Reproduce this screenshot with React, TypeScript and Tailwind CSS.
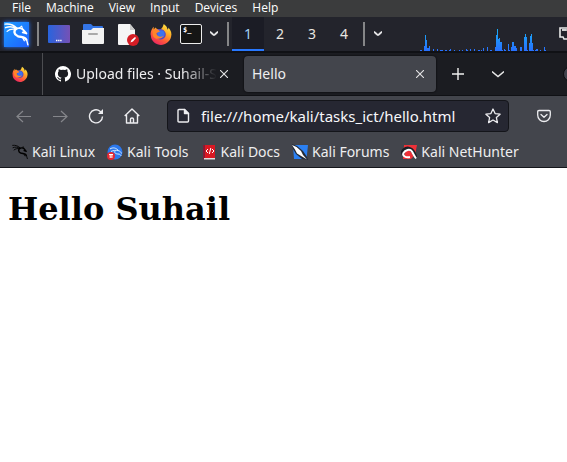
import React from "react";

const MENUS = ["File", "Machine", "View", "Input", "Devices", "Help"];

// CPU load samples: [column, height]
const LOAD: [number, number][] = [
  [0, 1], [1, 1], [4, 5], [5, 16], [6, 11], [7, 3], [8, 3], [9, 5], [13, 2], [17, 2], [20, 1], [21, 1], [22, 1],
  [25, 1], [26, 1], [29, 1], [30, 2], [34, 1], [39, 1], [42, 1], [46, 2], [47, 1], [50, 2], [54, 2], [58, 1],
  [59, 1], [61, 1], [63, 3], [67, 4], [70, 1], [71, 1], [75, 4], [76, 16], [77, 22], [78, 12], [79, 13], [80, 9],
  [81, 9], [82, 1], [84, 2], [85, 1], [88, 7], [89, 1], [91, 4], [92, 9], [93, 9], [94, 5], [95, 5], [96, 3],
  [100, 4], [101, 4], [104, 14], [105, 17], [106, 14], [107, 1], [109, 8], [110, 15], [111, 17], [112, 8],
  [113, 1], [115, 1], [116, 2], [117, 2], [120, 1], [124, 4], [125, 1],
];

function Dragon({ className }: { className?: string }) {
  return (
    <svg viewBox="0 0 24 24" className={className} fill="none" stroke="currentColor" strokeLinecap="round" strokeLinejoin="round" aria-hidden="true">
      <path d="M1 2c4-.5 8 .5 11.500 4M1.500 5.500C5 4 9 4.500 12 6.500M3 9c2-2 5-2.500 8-2" strokeWidth="1.300" />
      <path d="M12 6.300c-3 2-2.500 5.700 1 7.200 3.500 1.300 7 .5 8.500 3.500" strokeWidth="2.200" />
      <path d="M21.500 17c.8 1.500.8 3 1.500 5M18 15l1.500 3" strokeWidth="1.300" />
      <path d="M12 6.300c2.500-.8 4.500-.5 6.500 1.200l3 3.500-3.500-1" strokeWidth="1.800" />
      <path d="M15 5.500l2-1.500 1 3" strokeWidth="1" />
    </svg>
  );
}

function Firefox({ className, id }: { className?: string; id: string }) {
  return (
    <svg viewBox="0 0 24 24" className={className} aria-hidden="true">
      <defs>
        <linearGradient id={id} x1=".85" y1="0" x2=".25" y2="1">
          <stop offset="0" stopColor="#fff04d" />
          <stop offset=".35" stopColor="#ffae26" />
          <stop offset=".7" stopColor="#ff563b" />
          <stop offset="1" stopColor="#e92266" />
        </linearGradient>
      </defs>
      <path fill={`url(#${id})`} d="M15 1c3 2 4 4 4 6 1 0 1-1 1-2 3 3 4 7 3 10-1 5-6 9-11 9S1 20 1 14c-1-4 1-8 3-10v3l2-2c1 2 3 2 4 2 3 0 4-3 5-6z" />
      <path fill="#5946bd" d="M7 8c3-3 9-1 10 3 1 4-2 7-5 7s-6-2-6-5 3-2 4-4c-1-1-2-1-3-1z" />
      <circle cx="12" cy="12" r="4" fill="#3c73ef" />
      <path fill="#ff8429" d="M3 8c3-2 6-1 8 1-1 1-3 1-4 2 0 4 5 5 8 3-3 5-11 4-12-1z" />
    </svg>
  );
}

function ChevronSmall() {
  return (
    <svg viewBox="0 0 10 6" className="h-[6px] w-[10px]" fill="none" stroke="#e4e4e6" strokeWidth="1.8" aria-hidden="true">
      <path d="M1 1c1 0 3 3 4 3s3-3 4-3" />
    </svg>
  );
}

function Cross() {
  return (
    <svg viewBox="0 0 8 8" className="size-2" stroke="#e4e4e6" strokeWidth="1.1" aria-hidden="true">
      <path d="M0 0l8 8M8 0L0 8" />
    </svg>
  );
}

function LoadGraph() {
  return (
    <svg viewBox="0 0 128 24" className="h-6 w-32 shrink-0" shapeRendering="crispEdges" role="img" aria-label="CPU load">
      <defs>
        <linearGradient id="load" gradientUnits="userSpaceOnUse" x1="0" y1="0" x2="0" y2="24">
          <stop offset="0" stopColor="#17b5f5" />
          <stop offset="1" stopColor="#2870ff" />
        </linearGradient>
      </defs>
      {LOAD.map(([x, h]) => (
        <rect key={x} x={x} y={24 - h} width="1" height={h} fill="url(#load)" />
      ))}
    </svg>
  );
}

function PanelDivider() {
  return <span className="block h-6 w-0.5 shrink-0 bg-[#858688]" />;
}

function Panel() {
  return (
    <div className="flex h-[34px] items-center overflow-hidden bg-[#23242c]">
      <button aria-label="Applications" className="ml-1 flex size-[25px] shrink-0 items-center justify-center bg-linear-to-br from-[#249cff] to-[#205eff] text-white shadow-[0_0_4px_#2675ff]">
        <Dragon className="size-[25px]" />
      </button>
      <div className="ml-2 flex shrink-0 items-center">
        <PanelDivider />
        <button aria-label="Show desktop" className="ml-[9px]">
          <svg viewBox="0 0 22 18" className="h-[18px] w-[22px]" aria-hidden="true">
            <defs>
              <linearGradient id="desk">
                <stop offset="0" stopColor="#2864de" />
                <stop offset="1" stopColor="#7651b5" />
              </linearGradient>
            </defs>
            <rect width="22" height="18" rx="1" fill="url(#desk)" />
            <path d="M8 15.500h6" stroke="#fff" strokeWidth="1.5" strokeDasharray="1.4 .7" />
          </svg>
        </button>
        <button aria-label="Files" className="ml-3">
          <svg viewBox="0 0 22 20" className="h-5 w-[22px]" aria-hidden="true">
            <path fill="#3475e6" d="M1 1q0-1 1-1h7l2 2h9q1 0 1 1v5H1z" />
            <path fill="#f2f2f2" d="M0 6h9l2-2h11v15q0 1-1 1H1q-1 0-1-1z" />
            <path d="M7 10h8" stroke="#aaa" strokeWidth="2" strokeLinecap="round" />
          </svg>
        </button>
        <button aria-label="Text editor" className="ml-3.5">
          <svg viewBox="0 0 22 23" className="h-[23px] w-[22px]" aria-hidden="true">
            <path fill="#f5f5f5" d="M1 1h11l5 6v15H1q-1 0-1-1V2q0-1 1-1z" />
            <path fill="#c9c9c9" d="M12 1v6h5z" />
            <circle cx="15" cy="17" r="6" fill="#d51d25" />
            <path d="M12.5 19.5l1-2.5 3.5-3 1 1-3 3.5z" fill="#fff" />
          </svg>
        </button>
        <button aria-label="Firefox" className="ml-2.5"><Firefox id="fox-panel" className="size-[22px]" /></button>
        <button aria-label="Terminal" className="ml-2 flex h-5 w-[22px] items-start rounded-[2px] border border-[#ededed] bg-[#151515] pl-0.5 font-['DejaVu_Sans_Mono',monospace] text-[7px] leading-[11px] font-bold text-white">$_</button>
        <button aria-label="More launchers" className="ml-[7px]"><ChevronSmall /></button>
        <span className="ml-2"><PanelDivider /></span>
      </div>
      <nav aria-label="Workspaces" className="ml-[3px] flex h-full shrink-0 text-sm text-[#e8e6e1]">
        <button className="w-8 border-b-2 border-[#2878ff] bg-[#1b1c25] pt-0.5 text-[#a5d2f6]">1</button>
        <button className="w-8">2</button>
        <button className="w-8">3</button>
        <button className="w-8">4</button>
      </nav>
      <div className="ml-[3px] flex shrink-0 items-center">
        <PanelDivider />
        <button aria-label="More" className="ml-2"><ChevronSmall /></button>
      </div>
      <div className="ml-auto flex h-full shrink-0 items-end">
        <LoadGraph />
        <svg viewBox="0 0 8 14" className="mb-2.5 ml-[11px] h-3.5 w-2" fill="none" stroke="#e9e9e9" strokeWidth="1.6" aria-hidden="true">
          <path d="M8 1H1v9h3l1 2h3M3 3h5" />
          <path d="M4 2v2M6 2v2" strokeWidth="1" />
        </svg>
      </div>
    </div>
  );
}

function TabStrip() {
  return (
    <div className="flex h-[45px] items-center overflow-hidden border-t-2 border-b border-[#101115] bg-[#1b1c21] text-sm text-[#eeeef0]">
      <button aria-label="Firefox View" className="flex h-full w-[43px] shrink-0 items-center justify-center border-r border-[#4c4d51] pr-0.5">
        <Firefox id="fox-tab" className="size-4" />
      </button>
      <div role="tablist" className="flex shrink-0 items-center">
        <div className="flex w-[201px] items-center pl-3">
          <svg viewBox="0 0 16 16" className="size-4 shrink-0" fill="#fff" aria-hidden="true">
            <path d="M8 0a8 8 0 0 0-2.5 15.6c.4.1.5-.2.5-.4v-1.5c-2.2.5-2.7-1-2.7-1-.4-.9-.9-1.2-.9-1.2-.7-.5.1-.5.1-.5.8.1 1.2.8 1.2.8.7 1.3 1.9.9 2.3.7.1-.5.3-.9.5-1.1-1.8-.2-3.6-.9-3.6-4 0-.9.3-1.6.8-2.1-.1-.2-.4-1 .1-2.1 0 0 .7-.2 2.2.8a7.5 7.5 0 0 1 4 0c1.5-1 2.2-.8 2.2-.8.4 1.1.2 1.9.1 2.1.5.6.8 1.3.8 2.1 0 3.1-1.9 3.7-3.6 3.9.3.3.5.8.5 1.5v2.4c0 .2.1.5.5.4A8 8 0 0 0 8 0z" />
          </svg>
          <button role="tab" aria-selected="false" className="ml-[5px] w-[141px] overflow-hidden mask-r-from-75% mask-r-to-100% text-left whitespace-nowrap">Upload files · Suhail-S</button>
          <button aria-label="Close tab Upload files" className="ml-[3px]"><Cross /></button>
        </div>
        <div className="flex h-9 w-48 items-center justify-between rounded-[4px] bg-[#43454c] pr-3 pl-2 shadow-[0_0_2px_#000]">
          <button role="tab" aria-selected="true">Hello</button>
          <button aria-label="Close tab Hello"><Cross /></button>
        </div>
      </div>
      <button aria-label="New tab" className="ml-4 shrink-0">
        <svg viewBox="0 0 12 12" className="size-3" stroke="#f0f0f0" strokeWidth="1.4" aria-hidden="true"><path d="M6 0v12M0 6h12" /></svg>
      </button>
      <button aria-label="List all tabs" className="ml-7 shrink-0">
        <svg viewBox="0 0 12 7" className="h-[7px] w-3" fill="none" stroke="#e8e8e8" strokeWidth="1.4" aria-hidden="true"><path d="M0 .5l6 5 6-5" /></svg>
      </button>
      <span className="-mr-3 ml-auto size-4 shrink-0 rounded-full border border-[#0c0d10] bg-[#41434d]" />
    </div>
  );
}

function NavBar() {
  return (
    <div className="flex h-10 items-center pr-4 pl-4 text-[#ededf0]">
      <div className="flex shrink-0 items-center gap-5">
        <button aria-label="Back" className="text-[#85868b]">
          <svg viewBox="0 0 16 16" className="size-4" fill="none" stroke="currentColor" strokeWidth="1.2" aria-hidden="true"><path d="M15 8.500H1M7 3L1 8.500 7 14" /></svg>
        </button>
        <button aria-label="Forward" className="text-[#85868b]">
          <svg viewBox="0 0 16 16" className="size-4" fill="none" stroke="currentColor" strokeWidth="1.2" aria-hidden="true"><path d="M1 8.500h14M9 3l6 5.500L9 14" /></svg>
        </button>
        <button aria-label="Reload">
          <svg viewBox="0 0 16 16" className="size-4" fill="none" stroke="currentColor" strokeWidth="1.4" aria-hidden="true"><path d="M14.5 8.5A6.5 6.5 0 1 1 12 3.2l2 2" /><path d="M15 1v5h-5z" fill="currentColor" stroke="none" /></svg>
        </button>
        <button aria-label="Home">
          <svg viewBox="0 0 16 16" className="size-4" fill="none" stroke="currentColor" strokeWidth="1.4" strokeLinejoin="round" aria-hidden="true"><path d="M.7 8L8 1l7.300 7M2.500 7v8h11V7M6.500 15v-4q0-1 1.500-1t1.500 1v4" /></svg>
        </button>
      </div>
      <div className="ml-[27px] flex h-8 min-w-0 flex-1 items-center rounded-[4px] border border-[#14151a] bg-[#262732] pr-[7px] pl-2">
        <svg viewBox="0 0 14 16" className="h-4 w-3.5 shrink-0" fill="none" stroke="currentColor" strokeWidth="1.4" strokeLinejoin="round" aria-hidden="true"><path d="M3 1.500h5.500l4 4V13q0 1-1 1H3q-1 0-1-1V2.500q0-1 1-1z" /><path d="M8.500 1.500v4h4z" fill="currentColor" /></svg>
        <input aria-label="Address" defaultValue="file:///home/kali/tasks_ict/hello.html" className="ml-[11px] w-full min-w-0 bg-transparent text-[15px] text-[#f7f7fa] outline-none" />
        <button aria-label="Bookmark this page" className="ml-2 shrink-0">
          <svg viewBox="0 0 16 16" className="size-4" fill="none" stroke="currentColor" strokeWidth="1.3" strokeLinejoin="round" aria-hidden="true"><path d="M8 1l2.100 4.600 5 .6-3.700 3.400 1 5L8 12l-4.400 2.600 1-5L.9 6.200l5-.6z" /></svg>
        </button>
      </div>
      <button aria-label="Save to Pocket" className="ml-7 shrink-0">
        <svg viewBox="0 0 14 14" className="size-3.5" fill="none" stroke="currentColor" strokeWidth="1.3" strokeLinejoin="round" strokeLinecap="round" aria-hidden="true"><path d="M2 1.500h10q1.300 0 1.300 1.300V6c0 4-3 6.500-6.300 6.500S.7 10 .7 6V2.800Q.7 1.500 2 1.500zM4 5.500l3 2.800 3-2.800" /></svg>
      </button>
    </div>
  );
}

const BOOKMARKS: { label: string; icon: React.ReactNode }[] = [
  { label: "Kali Linux", icon: <Dragon className="size-4 text-black" /> },
  {
    label: "Kali Tools",
    icon: (
      <svg viewBox="0 0 16 16" className="size-4" aria-hidden="true">
        <circle cx="8" cy="8" r="7.500" fill="#2b78ee" />
        <path d="M3 5c3-2 6-1 8 1M4 7.500c2-1 5-1.500 7-1 2 .5 3 1.500 3.500 3M8 7c-1 2 1 3 3 3s3 1 3 2" fill="none" stroke="#d8edff" />
        <circle cx="4" cy="12" r="4" fill="#e42832" />
        <path d="M2 10.500h4M3.200 11v3M4.900 11v3" stroke="#fff" />
      </svg>
    ),
  },
  {
    label: "Kali Docs",
    icon: (
      <svg viewBox="0 0 16 16" className="size-4" aria-hidden="true">
        <path fill="#d91822" d="M2 1h12v13H2z" />
        <path fill="#851b35" d="M2 1h2v14H2z" />
        <path fill="#e4dddd" d="M3 14h11v1.500H3z" />
        <path d="M7 5L5 7l2 2M11 5l2 2-2 2M9.800 4l-1.500 6" stroke="#fff" fill="none" />
      </svg>
    ),
  },
  {
    label: "Kali Forums",
    icon: (
      <svg viewBox="0 0 16 16" className="size-4" aria-hidden="true">
        <path fill="#2b80f3" d="M1 1h15l-1.500 14H2z" />
        <path fill="#242a35" d="M0 0l5 2 6 5 4 6 1 3-6-1-6-5-3-5z" />
        <path fill="#fff" d="M0 1l4.500 2L9 7l2 4 4 4.500-5-3L5 9.500 3 5.500z" />
      </svg>
    ),
  },
  {
    label: "Kali NetHunter",
    icon: (
      <svg viewBox="0 0 16 16" className="size-4" aria-hidden="true">
        <path fill="#ed3138" d="M3 1h13l-2 10-4 4H2z" />
        <path d="M3 11C-1 7 5 3 9 5c3 1 4 4 6 9" fill="none" stroke="#182026" strokeWidth="3.500" />
        <path d="M9 13c-4 1-8-1-6.500-4S9 4.500 11 7.500c1 2 2 4 4 7" fill="none" stroke="#fff" strokeWidth="2" />
      </svg>
    ),
  },
];

export default function App() {
  return (
    <div className="flex min-h-screen flex-col bg-white font-['Noto_Sans',sans-serif]">
      <nav aria-label="Virtual machine" className="flex h-[17px] items-start gap-[15px] bg-[#3b3c3d] pl-3 font-['Open_Sans',sans-serif] text-xs leading-[17px] text-white">
        {MENUS.map((m) => <button key={m} className="-mt-px">{m}</button>)}
      </nav>
      <Panel />
      <TabStrip />
      <div className="border-b border-[#15161b] bg-[#43454c]">
        <NavBar />
        <nav aria-label="Bookmarks" className="flex h-[31px] items-center gap-3 overflow-hidden pl-3 text-sm whitespace-nowrap text-[#eeeeef]">
          {BOOKMARKS.map((b) => (
            <a key={b.label} href="#" className="flex shrink-0 items-center gap-1">{b.icon}{b.label}</a>
          ))}
        </nav>
      </div>
      <main className="px-2 py-[21px]">
        <h1 className="font-['DejaVu_Serif',serif] text-[32px] leading-10 font-bold text-black">Hello Suhail</h1>
      </main>
    </div>
  );
}
